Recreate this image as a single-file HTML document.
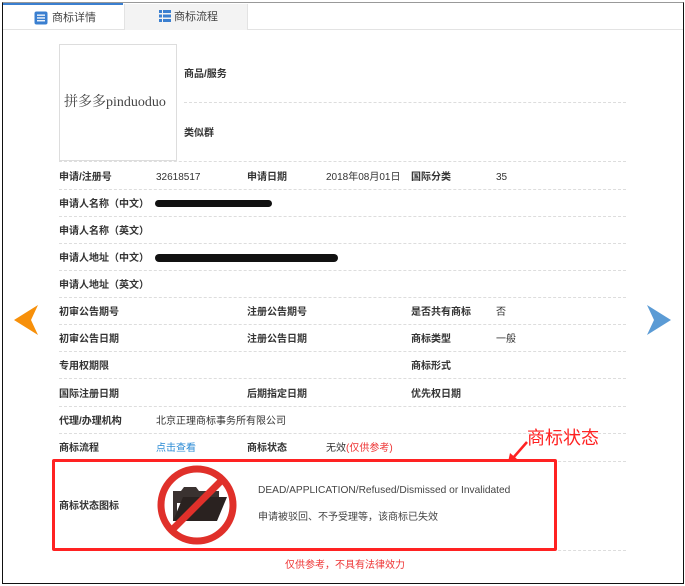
<!DOCTYPE html>
<html><head><meta charset="utf-8"><style>
*{margin:0;padding:0;box-sizing:border-box}
body{width:685px;height:586px;background:#fff;position:relative;overflow:hidden;font-family:"Liberation Sans","Noto Sans CJK SC",sans-serif;font-size:10px;line-height:12px;color:#333}
.a{position:absolute;white-space:nowrap}
.b{font-weight:bold;color:#333}
.l{position:absolute;left:59px;width:567px;border-top:1px dashed #ddd}
.w{position:absolute;left:0;top:2px;width:685px;height:0}
</style></head><body>
<div class="a" style="left:2px;top:2px;width:682px;height:582px;border:1px solid #111;border-top:1px solid #999"></div>
<div class="a" style="left:3px;top:3px;width:120px;height:2px;background:#3a7fd0"></div>
<div class="a" style="left:3px;top:5px;width:680px;height:25px;border-bottom:1px solid #e3e3e3"></div>
<div class="a" style="left:124px;top:4px;width:124px;height:26px;background:#f3f3f3;border-left:1px solid #e3e3e3;border-right:1px solid #e3e3e3"></div>
<svg class="a" style="left:34px;top:11px" width="14" height="14"><rect x="0.5" y="0.5" width="13" height="13" rx="2" fill="#3a7fd0"/><rect x="3" y="3.5" width="8" height="1.3" fill="#fff"/><rect x="3" y="6.3" width="8" height="1.3" fill="#fff"/><rect x="3" y="9.1" width="8" height="1.3" fill="#fff"/></svg>
<div class="a" style="left:52px;top:12px;font-size:11px;color:#444">商标详情</div>
<svg class="a" style="left:159px;top:10px" width="12" height="12"><g fill="#3a7fd0"><rect x="0" y="0" width="3" height="3"/><rect x="4" y="0" width="8" height="3"/><rect x="0" y="4.5" width="3" height="3"/><rect x="4" y="4.5" width="8" height="3"/><rect x="0" y="9" width="3" height="3"/><rect x="4" y="9" width="8" height="3"/></g></svg>
<div class="a" style="left:174px;top:11px;font-size:11px;color:#444">商标流程</div>

<div class="a" style="left:59px;top:44px;width:118px;height:117px;border:1px solid #ddd"></div>
<div class="a" style="left:64px;top:95px;font-family:'Liberation Serif','Noto Serif CJK SC',serif;font-size:14px;line-height:16px;color:#444">拼多多pinduoduo</div>
<div class="a" style="left:184px;top:102px;width:442px;border-top:1px dashed #ddd"></div>
<div class="l" style="top:161px"></div>
<div class="l" style="top:189px"></div>
<div class="l" style="top:216px"></div>
<div class="l" style="top:243px"></div>
<div class="l" style="top:270px"></div>
<div class="l" style="top:297px"></div>
<div class="l" style="top:324px"></div>
<div class="l" style="top:351px"></div>
<div class="l" style="top:378px"></div>
<div class="l" style="top:406px"></div>
<div class="l" style="top:433px"></div>
<div class="l" style="top:461px"></div>
<div class="l" style="top:550px"></div>

<div class="w">
<div class="a b" style="left:184px;top:67px">商品/服务</div>
<div class="a b" style="left:184px;top:126px">类似群</div>
<div class="a b" style="left:59px;top:170px">申请/注册号</div><div class="a" style="left:156px;top:170px">32618517</div>
<div class="a b" style="left:247px;top:170px">申请日期</div><div class="a" style="left:326px;top:170px">2018年08月01日</div>
<div class="a b" style="left:411px;top:170px">国际分类</div><div class="a" style="left:496px;top:170px">35</div>
<div class="a b" style="left:59px;top:197px">申请人名称（中文）</div>
<div class="a b" style="left:59px;top:224px">申请人名称（英文）</div>
<div class="a b" style="left:59px;top:251px">申请人地址（中文）</div>
<div class="a b" style="left:59px;top:278px">申请人地址（英文）</div>
<div class="a b" style="left:59px;top:305px">初审公告期号</div>
<div class="a b" style="left:247px;top:305px">注册公告期号</div>
<div class="a b" style="left:411px;top:305px">是否共有商标</div><div class="a" style="left:496px;top:305px">否</div>
<div class="a b" style="left:59px;top:332px">初审公告日期</div>
<div class="a b" style="left:247px;top:332px">注册公告日期</div>
<div class="a b" style="left:411px;top:332px">商标类型</div><div class="a" style="left:496px;top:332px">一般</div>
<div class="a b" style="left:59px;top:359px">专用权期限</div>
<div class="a b" style="left:411px;top:359px">商标形式</div>
<div class="a b" style="left:59px;top:387px">国际注册日期</div>
<div class="a b" style="left:247px;top:387px">后期指定日期</div>
<div class="a b" style="left:411px;top:387px">优先权日期</div>
<div class="a b" style="left:59px;top:414px">代理/办理机构</div><div class="a" style="left:156px;top:414px">北京正理商标事务所有限公司</div>
<div class="a b" style="left:59px;top:441px">商标流程</div><div class="a" style="left:156px;top:441px;color:#2a8ad4">点击查看</div>
<div class="a b" style="left:247px;top:441px">商标状态</div><div class="a" style="left:326px;top:441px">无效<span style="color:#e33">(仅供参考)</span></div>
<div class="a b" style="left:59px;top:499px">商标状态图标</div>
<div class="a" style="left:258px;top:483px;font-size:10.2px;color:#444">DEAD/APPLICATION/Refused/Dismissed or Invalidated</div>
<div class="a" style="left:258px;top:510px;color:#444">申请被驳回、不予受理等，该商标已失效</div>
<div class="a" style="left:285px;top:558px;color:#e33">仅供参考，不具有法律效力</div>
</div>
<div class="a" style="left:155px;top:200px;width:117px;height:7px;background:#111;border-radius:4px"></div>
<div class="a" style="left:155px;top:254px;width:183px;height:8px;background:#111;border-radius:4px"></div>

<div class="a" style="left:52px;top:459px;width:505px;height:92px;border:3px solid #f22;border-radius:2px"></div>
<svg class="a" style="left:155px;top:463px" width="84" height="84">
<path d="M18 28 h8 l3 -4 h12 l3 4 h20 v12 h-46 z" fill="#3a3230"/>
<path d="M18 28 v30 h4 v-28 z" fill="#3a3230"/>
<path d="M18 58 l10 -24 h44 l-10 24 z" fill="#2a2220"/>
<circle cx="42" cy="42" r="36" fill="none" stroke="#e0302a" stroke-width="7"/>
<line x1="67" y1="17" x2="17" y2="67" stroke="#e0302a" stroke-width="7"/>
</svg>

<div class="a" style="left:527px;top:427px;font-size:18px;line-height:22px;color:#f22">商标状态</div>
<svg class="a" style="left:505px;top:440px" width="25" height="25"><path d="M22 2 L8 18" stroke="#f22" stroke-width="2.5"/><path d="M3 22 L5 13 L12 19 z" fill="#f22"/></svg>

<svg class="a" style="left:14px;top:305px" width="24" height="30"><path d="M24 0 L0 15 L24 30 L17 15 z" fill="#f7900a"/></svg>
<svg class="a" style="left:647px;top:305px" width="24" height="30"><path d="M0 0 L24 15 L0 30 L7 15 z" fill="#5b9bd5"/></svg>
</body></html>
